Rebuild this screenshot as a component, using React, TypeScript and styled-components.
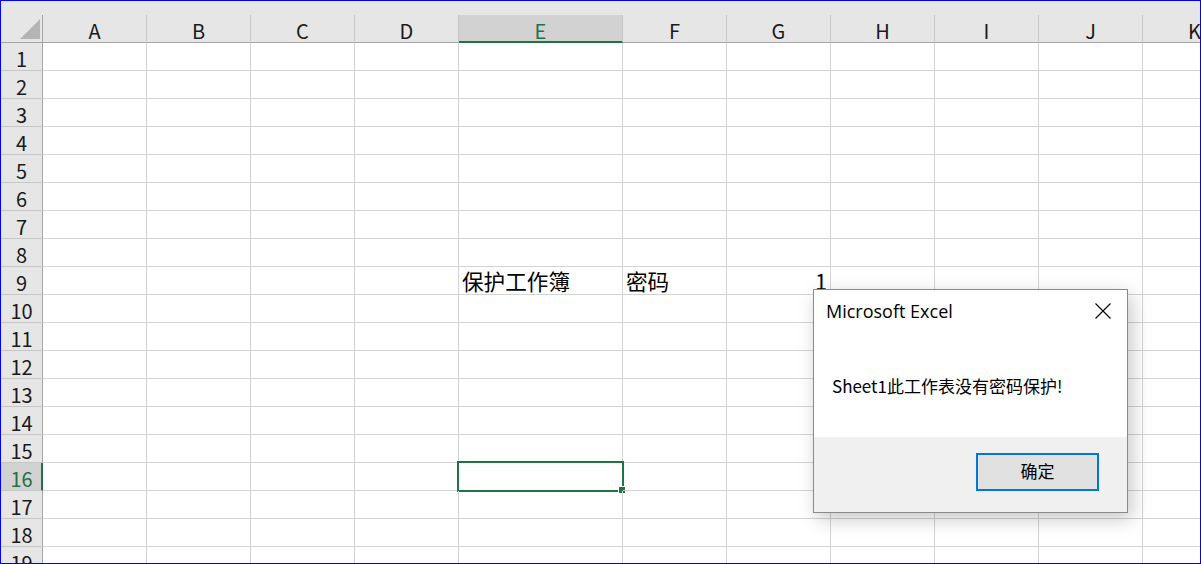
import React from 'react'
import styled, { createGlobalStyle } from 'styled-components'

const GREEN = '#217346'
const COLS = ['A', 'B', 'C', 'D', 'E', 'F', 'G', 'H', 'I', 'J', 'K']
const ROWS = Array.from({ length: 19 }, (_, i) => i + 1)
const SELECTED_COL = 'E'
const SELECTED_ROW = 16

// cell contents, keyed "col+row"
const values: Record<string, { text: string; align?: 'left' | 'right' }> = {
  E9: { text: '保护工作簿' },
  F9: { text: '密码' },
  G9: { text: '1', align: 'right' },
}

const GlobalStyle = createGlobalStyle`
  html, body {
    margin: 0;
    padding: 0;
    background: #fff;
    overflow: hidden;
  }
`

const Frame = styled.div`
  position: relative;
  width: 1201px;
  height: 564px;
  box-sizing: border-box;
  border: 1px solid #0000ff;
  overflow: hidden;
  background: #fff;
  font-family: "Noto Sans CJK SC", "Liberation Sans", sans-serif;
`

const TopStrip = styled.div`
  height: 14px;
  background: #e6e6e6;
`

const Grid = styled.div`
  display: grid;
  grid-template-columns: 42px repeat(4, 104px) 164px repeat(6, 104px);
  grid-auto-rows: 28px;
  width: max-content;
`

const Corner = styled.div`
  box-sizing: border-box;
  background: #e6e6e6;
  border-right: 1px solid #a6a6a6;
  border-bottom: 1px solid #a6a6a6;
  display: flex;
  align-items: flex-end;
  justify-content: flex-end;
  padding: 0 2px 3px 0;
`

const ColHeader = styled.div<{ $selected?: boolean }>`
  box-sizing: border-box;
  background: ${p => (p.$selected ? '#d2d2d2' : '#e6e6e6')};
  border-right: 1px solid #c6c6c6;
  border-bottom: ${p => (p.$selected ? `2px solid ${GREEN}` : '1px solid #a6a6a6')};
  color: ${p => (p.$selected ? GREEN : '#1a1a1a')};
  font-size: 20px;
  display: flex;
  align-items: center;
  justify-content: center;
  padding-top: ${p => (p.$selected ? '5px' : '4px')};
`

const RowHeader = styled.div<{ $selected?: boolean }>`
  box-sizing: border-box;
  background: ${p => (p.$selected ? '#d2d2d2' : '#e6e6e6')};
  border-right: ${p => (p.$selected ? `2px solid ${GREEN}` : '1px solid #a6a6a6')};
  border-bottom: 1px solid #c6c6c6;
  color: ${p => (p.$selected ? GREEN : '#1a1a1a')};
  font-size: 20px;
  display: flex;
  align-items: center;
  justify-content: center;
  padding-top: 4px;
  padding-left: ${p => (p.$selected ? '1px' : '0')};
`

const Cell = styled.div<{ $align?: 'left' | 'right' }>`
  position: relative;
  box-sizing: border-box;
  border-right: 1px solid #d4d4d4;
  border-bottom: 1px solid #d4d4d4;
  font-size: 21.6px;
  color: #000;
  white-space: nowrap;
  display: flex;
  align-items: flex-end;
  justify-content: ${p => (p.$align === 'right' ? 'flex-end' : 'flex-start')};
  padding: 0 3px 0 3px;
  line-height: 26px;
`

const Selection = styled.div`
  position: absolute;
  left: -2px;
  top: -2px;
  width: 167px;
  height: 31px;
  box-sizing: border-box;
  border: 2px solid ${GREEN};
  pointer-events: none;
`

const FillHandle = styled.div`
  position: absolute;
  right: -3px;
  bottom: -3px;
  width: 6px;
  height: 6px;
  background: ${GREEN};
  border-left: 1px solid #fff;
  border-top: 1px solid #fff;
`

const Dialog = styled.div`
  position: absolute;
  left: 812px;
  top: 288px;
  width: 315px;
  height: 224px;
  box-sizing: border-box;
  border: 1px solid #8a8a8a;
  background: #fff;
  box-shadow: 4px 6px 18px rgba(0, 0, 0, 0.22);
  display: flex;
  flex-direction: column;
`

const TitleBar = styled.div`
  height: 44px;
  display: flex;
  align-items: center;
  justify-content: space-between;
  padding: 0 16px 3px 12px;
  box-sizing: border-box;
`

const Title = styled.span`
  font-family: "Open Sans", "Noto Sans", sans-serif;
  font-size: 18px;
  color: #000;
`

const CloseButton = styled.div`
  width: 16px;
  height: 16px;
  display: flex;
`

const Body = styled.div`
  flex: 1;
  display: flex;
  align-items: center;
  padding: 0 18px;
`

const Message = styled.span`
  font-size: 17px;
  color: #000;
  white-space: nowrap;
`

const Footer = styled.div`
  height: 75px;
  background: #f0f0f0;
  display: flex;
  justify-content: flex-end;
  align-items: flex-start;
  padding: 16px 28px 0 0;
  box-sizing: border-box;
`

const OkButton = styled.button`
  width: 123px;
  height: 38px;
  box-sizing: border-box;
  border: 2px solid #0078d7;
  background: #e1e1e1;
  font-family: "Noto Sans CJK SC", sans-serif;
  font-size: 17px;
  line-height: 30px;
  color: #000;
  padding: 0 0 2px;
`

function CornerTriangle() {
  return (
    <svg width="20" height="20" viewBox="0 0 20 20">
      <polygon points="20,0 20,20 0,20" fill="#b4b4b4" />
    </svg>
  )
}

function CloseIcon() {
  return (
    <svg width="16" height="16" viewBox="0 0 16 16">
      <path d="M0.5 0.5 L15.5 15.5 M15.5 0.5 L0.5 15.5" stroke="#000" strokeWidth="1.1" fill="none" />
    </svg>
  )
}

export default function App() {
  return (
    <>
      <GlobalStyle />
      <Frame>
        <TopStrip />
        <Grid>
          <Corner>
            <CornerTriangle />
          </Corner>
          {COLS.map(c => (
            <ColHeader key={c} $selected={c === SELECTED_COL}>
              {c}
            </ColHeader>
          ))}
          {ROWS.map(r => (
            <React.Fragment key={r}>
              <RowHeader $selected={r === SELECTED_ROW}>{r}</RowHeader>
              {COLS.map(c => {
                const v = values[c + r]
                const active = c === SELECTED_COL && r === SELECTED_ROW
                return (
                  <Cell key={c} $align={v?.align}>
                    {v?.text}
                    {active && (
                      <Selection>
                        <FillHandle />
                      </Selection>
                    )}
                  </Cell>
                )
              })}
            </React.Fragment>
          ))}
        </Grid>

        <Dialog>
          <TitleBar>
            <Title>Microsoft Excel</Title>
            <CloseButton>
              <CloseIcon />
            </CloseButton>
          </TitleBar>
          <Body>
            <Message>Sheet1此工作表没有密码保护!</Message>
          </Body>
          <Footer>
            <OkButton>确定</OkButton>
          </Footer>
        </Dialog>
      </Frame>
    </>
  )
}
